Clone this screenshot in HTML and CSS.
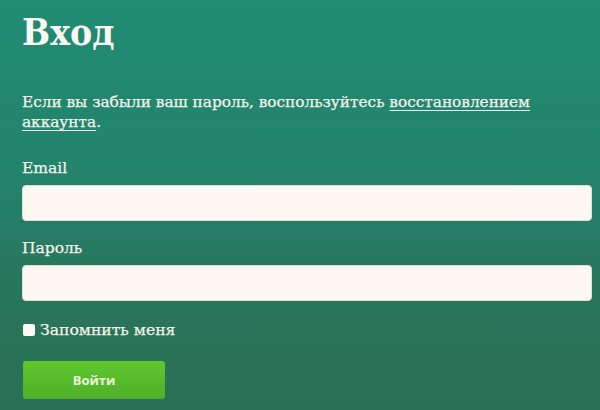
FILE: index.html
```html
<!DOCTYPE html>
<html lang="ru">
<head>
<meta charset="utf-8">
<link rel="stylesheet" href="styles.css">
</head>
<body>
<main class="login">
  <h1 class="title">Вход</h1>
  <p class="intro">Если вы забыли ваш пароль, воспользуйтесь <a href="#" class="link">восстановлением аккаунта</a>.</p>
  <form class="form">
    <label class="label" for="email">Email</label>
    <input class="input" id="email" type="text">
    <label class="label label-gap" for="pass">Пароль</label>
    <input class="input" id="pass" type="password">
    <label class="remember"><span class="box"></span>Запомнить меня</label>
    <button class="btn" type="button">Войти</button>
  </form>
</main>
</body>
</html>
```
FILE: styles.css
```css
html, body {
  margin: 0;
  height: 100%;
}
body {
  background: linear-gradient(180deg, #218b74 0%, #23846d 40%, #28755b 70%, #2a7056 100%);
  font-family: "DejaVu Serif", "Liberation Serif", serif;
  color: #f7f3ea;
  overflow: hidden;
}
.login {
  width: 570px;
  padding: 0 0 0 22px;
}
.title {
  margin: 0;
  padding-top: 8px;
  font-family: "DejaVu Serif Condensed", "DejaVu Serif", serif;
  font-stretch: condensed;
  font-size: 37px;
  line-height: 48px;
  font-weight: bold;
  color: #fbf8f0;
}
.intro {
  margin: 36px 0 0;
  font-size: 15.3px;
  line-height: 20px;
  -webkit-text-stroke: 0.25px #f7f3ea;
}
.link {
  color: #f7f3ea;
  text-decoration: underline;
  text-underline-offset: 3px;
  text-decoration-thickness: 1px;
}
.form {
  display: flex;
  flex-direction: column;
  align-items: flex-start;
  margin-top: 26px;
}
.label {
  font-size: 15.5px;
  line-height: 20px;
  margin-bottom: 7.4px;
  -webkit-text-stroke: 0.25px #f7f3ea;
}
.label-gap {
  margin-top: 16.6px;
}
.input {
  box-sizing: border-box;
  width: 570px;
  height: 36px;
  margin: 0;
  border: 1px solid #d9e3d8;
  border-radius: 4px;
  background: #fdf8f2;
}
.remember {
  display: flex;
  align-items: center;
  gap: 5px;
  font-size: 15.6px;
  line-height: 20px;
  margin-top: 18.6px;
  -webkit-text-stroke: 0.25px #f7f3ea;
}
.box {
  width: 12px;
  height: 12px;
  margin-left: 1px;
  border-radius: 2px;
  background: #fdfbf7;
}
.btn {
  margin-top: 21.4px;
  margin-left: 1px;
  width: 142px;
  height: 38px;
  border: none;
  border-radius: 3px;
  background: linear-gradient(180deg, #5ec82d 0%, #4fb028 100%);
  color: #eef6de;
  font-family: "Open Sans", "Liberation Sans", sans-serif;
  font-weight: bold;
  font-size: 13px;
}
```
